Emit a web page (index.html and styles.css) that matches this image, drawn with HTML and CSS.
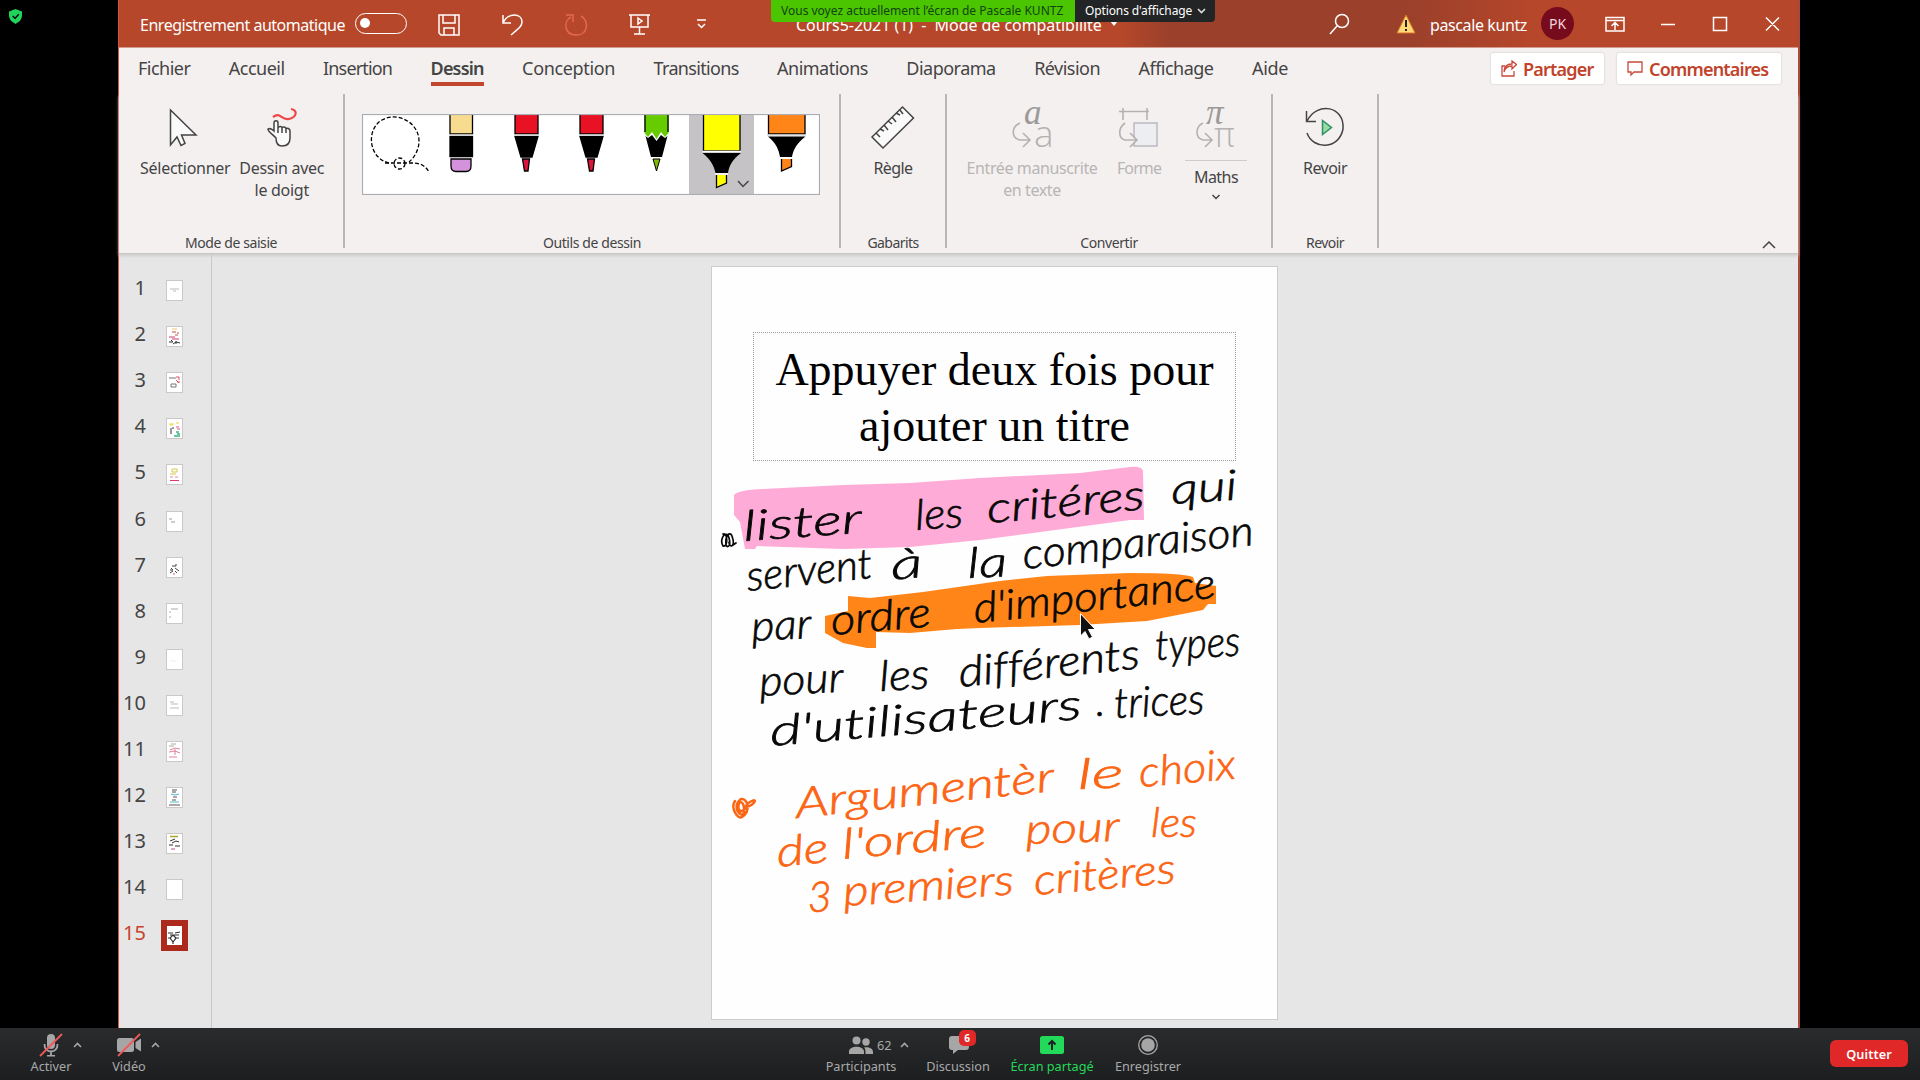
FILE: index.html
```html
<!DOCTYPE html>
<html lang="fr">
<head>
<meta charset="utf-8">
<title>Cours5-2021</title>
<link rel="stylesheet" href="styles.css">
</head>
<body>
<main class="stage">
<section class="window">
  <header class="titlebar">
    <span class="autosave">Enregistrement automatique</span>
    <span class="toggle"><i></i></span>
    <svg class="quick" viewBox="428 0 300 47">
      <g class="line-white">
        <path d="M440 15H460V35H442L440 33ZM444 15V23H456V15M445 35V28H455V35"/>
        <path d="M504 15V23H512M504 23C509 12 523 13 523 22C523 26 520 28 512 35"/>
        <path class="faded" d="M567 15H574V22M582 16C590 20 590 35 577 35C565 35 564 21 572 17"/>
        <path d="M630 15H651M632 15V27H649V15M640.5 27V34M635 34H646"/>
        <path d="M639 18L643 21L639 24Z"/>
        <path d="M698 20H707M699 24L702.5 27.5L706 24"/>
      </g>
    </svg>
    <span class="doc-title">Cours5-2021 (1)&nbsp; -&nbsp; Mode de compatibilité</span>
    <svg class="caret" viewBox="0 0 8 5"><path d="M0 0H8L4 5Z"/></svg>
    <svg class="search" viewBox="1330 12 22 24"><g class="line-white"><circle cx="1343" cy="21" r="6.5"/><path d="M1338 26L1331 34"/></g></svg>
    <svg class="warning" viewBox="0 0 20 20"><path class="tri" d="M10 1L19 19H1Z"/><path d="M9 6H11V13H9ZM9 15H11V17H9Z"/></svg>
    <span class="user">pascale kuntz</span>
    <span class="avatar">PK</span>
    <svg class="controls" viewBox="1600 8 190 32"><g class="line-white">
      <path d="M1606 17.5H1624V31H1606ZM1606 20.5H1624M1615 30V23M1611.5 26L1615 22.500L1618.500 26"/>
      <path d="M1661 24.500H1675M1713.500 17.500H1726.500V30.500H1713.500ZM1766 17.500L1779 30.500M1779 17.500L1766 30.500"/>
    </g></svg>
  </header>

  <nav class="tabs">
    <span class="t1">Fichier</span><span class="t2">Accueil</span><span class="t3">Insertion</span><span class="t4 active">Dessin</span><span class="t5">Conception</span><span class="t6">Transitions</span><span class="t7">Animations</span><span class="t8">Diaporama</span><span class="t9">Révision</span><span class="t10">Affichage</span><span class="t11">Aide</span>
    <div class="actions">
      <button class="share"><svg viewBox="0 0 16 17"><path d="M4 6H1V16H13V11M3 12C4 8 7 6 11 6V9L15.500 4.500L11 1V4C6 4 3 7 3 12Z"/></svg><span>Partager</span></button>
      <button class="comments"><svg viewBox="0 0 16 17"><path d="M1 2H15V12H7L4 15V12H1Z"/></svg><span>Commentaires</span></button>
    </div>
  </nav>

  <section class="ribbon">
    <div class="group g-input">
      <div class="tools">
        <div class="tool select"><svg viewBox="168 106 34 42"><path class="dark fillw" d="M170.500 110V145L177 137L181 145.500L185 143.500L181.500 135H196Z"/></svg><span>Sélectionner</span></div>
        <div class="tool touch"><svg viewBox="264 106 34 42"><path class="red" d="M272 117C280 111 280 121 288 119C296 117 297 110 290 109"/><path class="dark fillw" d="M275 138C271 134 266 130 267 129C269 128 271 129 273 131V123C273 120 277 120 277 123V128C278 126 281 126 281 128C282 126 285 127 285 129C286 127 289 129 289 131V138C289 143 286 146 281 146C277 146 275 143 275 138ZM277 128V133M281 128V133M285 129V133"/></svg><span>Dessin avec</span><span>le doigt</span></div>
      </div>
      <span class="caption">Mode de saisie</span>
    </div>
    <div class="group g-pens">
      <svg class="pens" viewBox="362 114 458 81">
        <rect x="362" y="114" width="458" height="81" fill="#fff"/>
        <rect x="689" y="114" width="65" height="81" fill="#c6c3c6"/>
        <g fill="none" stroke="#000" stroke-width="1.300" stroke-dasharray="4 2"><path d="M389 163C368 158 366 129 382 120C398 111 419 123 419 141C419 150 414 158 409 162"/><path d="M385 163H413C420 163 426 166 429 172"/><circle cx="399.500" cy="163.500" r="5.500"/></g>
        <g stroke="#000" stroke-width="1.300">
          <path fill="#f7dc90" d="M450 114V134H472.500V114"/><path d="M450 136.500H472.500V156.500H450Z"/><path fill="#d592dc" d="M451 159H471V166Q471 171.500 466 171.500H456Q451 171.500 451 166Z"/>
          <path fill="#e81224" d="M515 114V134H538V114M580 114V134H603V114"/>
          <path d="M515 136.500H538L532 157H521ZM580 136.500H603L597 157H586Z"/>
          <path fill="#dc143c" d="M522.500 159H529.500L528 171H524.500ZM587.500 159H594.500L593 171H589.500Z"/>
          <path fill="#66cc00" stroke="none" d="M644.500 114V133L648 137L652 132L656.500 139L661 132L665 137L668.500 133V114Z"/>
          <path d="M645 114V132M668 114V132"/><path stroke="none" d="M645.500 136L648 138L652 135L656.500 141L661 135L665 138L667.500 136L662 157H651Z"/>
          <path fill="#7fba00" d="M653 159H660L656.500 171Z" stroke-width="1"/>
          <path fill="#ff0" d="M703.500 114V151H740V114"/><path stroke="none" d="M702.500 153H741C732 160 729 166 728 173H715.500C714 166 711 160 702.500 153Z"/><path fill="#ff0" d="M716.500 175V187.500L726.500 183V175"/>
          <path stroke="#fff" stroke-width="1.500" d="M702.500 151.600H741M715 174H728"/>
          <path fill="#ff8518" d="M768.500 114V134H805V114"/><path stroke="none" d="M768 136.500H805.500C797 143 793 150 792 157H780C779 150 776 143 768 136.500Z"/><path fill="#ff8518" d="M781.500 159V171L791.500 166.500V159"/>
        </g>
        <path stroke="#ddd" stroke-width="1.500" d="M449 135H473M514 135H539M579 135H604M767 135H806"/>
        <path class="dark" d="M738 181L743 186.500L748.500 181"/>
        <rect x="362.500" y="114.500" width="457" height="80" fill="none" stroke="#aaacb3" stroke-width="1.200"/>
      </svg>
      <span class="caption">Outils de dessin</span>
    </div>
    <div class="group g-ruler">
      <div class="tools"><div class="tool"><svg viewBox="872 105 44 44"><path class="dark fillw" d="M873 137L903.500 107L914.500 118L884 148Z"/><path class="dark" d="M877 133L881 137M881 129L885 131M885 125L889 130M889 121L893 124M893 117L897 122M897 113L901 115M901 110L904 114"/></svg><span>Règle</span></div></div>
      <span class="caption">Gabarits</span>
    </div>
    <div class="group g-convert">
      <div class="tools">
        <div class="tool dim to-text"><svg viewBox="1010 105 44 44"><path class="grey" d="M1020 123C1011 127 1011 138 1020 140H1030M1023 133L1030 140L1023 147"/><text class="script" x="1024" y="124">a</text><text x="1034" y="147" class="plain">a</text></svg><span>Entrée manuscrite</span><span>en texte</span></div>
        <div class="tool dim shape"><svg viewBox="1117 105 44 44"><path fill="#edeef1" stroke="#b9b9c0" stroke-width="1.500" d="M1134 123H1157V146H1134Z"/><path stroke="#f4f0f0" stroke-width="5" d="M1121 140H1137"/><path class="grey" d="M1125 123C1118 128 1118 138 1125 140H1137M1130 133L1137 140L1130 147M1119 111.500H1149M1123 108V120M1147 108V120"/></svg><span>Forme</span></div>
        <div class="tool maths"><svg viewBox="1194 105 44 44"><path class="grey" d="M1203 123C1195 127 1195 138 1203 140H1212M1205 133L1212 140L1205 147"/><text class="script" x="1206" y="124">π</text><text class="plain pi" x="1214" y="147">π</text></svg><span>Maths</span><svg class="chev" viewBox="0 0 10 6"><path class="dark" d="M1.500 1L5 4.500L8.500 1"/></svg></div>
      </div>
      <span class="caption">Convertir</span>
    </div>
    <div class="group g-replay">
      <div class="tools"><div class="tool"><svg viewBox="1304 105 44 44"><path class="dark" d="M1308 133C1314 150 1340 150 1344 129C1346 106 1318 101 1308 121M1307.500 111V121.500H1317"/><path d="M1323.500 120.500V134.500L1332.500 127.500Z" fill="#98dba5" stroke="#2f8f62" stroke-width="1.500"/></svg><span>Revoir</span></div></div>
      <span class="caption">Revoir</span>
    </div>
    <svg class="collapse" viewBox="0 0 14 8"><path class="dark" d="M1 7L7 1L13 7"/></svg>
  </section>

  <section class="workspace">
    <ol class="slides">
      <li><b>1</b><svg viewBox="0 0 15 19"><path stroke="#bbb" d="M3 8H12M6 10H9"/></svg></li>
      <li><b>2</b><svg viewBox="0 0 15 19"><path stroke="#eec85c" d="M5 2H10"/><path stroke="#b54" d="M5 5H9M10 6H12M8 8H11"/><path stroke="#d3366a" d="M2 10H8M5 12H12"/><path stroke="#333" d="M2 15H6L4 13M6 17L9 15L13 16M9 14V17"/></svg></li>
      <li><b>3</b><svg viewBox="0 0 15 19"><path stroke="#777" d="M2 5H9M4 11H9V14H4Z"/><path stroke="#df5264" d="M9 4H12V7M10 9H13M9 7L12 10"/></svg></li>
      <li><b>4</b><svg viewBox="0 0 15 19"><path stroke="#ecd338" d="M2 5H7M9 4H12M3 6H6"/><path stroke="#333" d="M4 9V15M5 9H7"/><path stroke="#e4577a" d="M9 8H12M10 10H13"/><path stroke="#39b681" stroke-width="1.5" d="M9 13H12M7 17H13M10 15H13"/></svg></li>
      <li><b>5</b><svg viewBox="0 0 15 19"><path stroke="#d5c84a" d="M5 4H10V7H5ZM3 9H9"/><path stroke="#e3859e" d="M3 12H6M8 12H11"/><path stroke="#df3a69" d="M3 15.500H12"/></svg></li>
      <li><b>6</b><svg viewBox="0 0 15 19"><path stroke="#999" d="M2 7H5M4 10H8"/></svg></li>
      <li><b>7</b><svg viewBox="0 0 15 19"><path stroke="#444" d="M5 8H9V6M3 12H6L4 10M8 10L12 13M3 15L6 13M8 13L10 15"/><path stroke="#d57" d="M6 16H8"/></svg></li>
      <li><b>8</b><svg viewBox="0 0 15 19"><path stroke="#aaa" d="M4 5H11M2 8H4M2 13H4"/></svg></li>
      <li><b>9</b><svg viewBox="0 0 15 19"><path stroke="#eee" d="M3 11H10"/></svg></li>
      <li><b>10</b><svg viewBox="0 0 15 19"><path stroke="#bbb" d="M3 6H7M4 8H11M3 12H12"/></svg></li>
      <li><b>11</b><svg viewBox="0 0 15 19"><path stroke="#aaa" d="M4 2H9M2 4H7"/><path stroke="#d86581" stroke-width=".8" d="M3 8L8 6L13 7M2 10L8 9L13 11M2 15H10M8 7V13"/></svg></li>
      <li><b>12</b><svg viewBox="0 0 15 19"><path stroke="#555" d="M5 2H10M5 4H9M6 9H10M5 12H9M2 17H13"/><path stroke="#54b9d0" d="M4 6L8 7L12 6M3 14H12"/></svg></li>
      <li><b>13</b><svg viewBox="0 0 15 19"><path stroke="#a7a42f" stroke-width="1.5" d="M3 2.500H11"/><path stroke="#333" d="M3 7L8 5M5 9L9 7L12 8M2 11H6M8 12H13"/><path stroke="#d885b0" stroke-width="1.500" d="M4 15H8"/></svg></li>
      <li><b>14</b><svg viewBox="0 0 15 19"></svg></li>
      <li class="current"><b>15</b><svg viewBox="0 0 15 19"><path stroke="#333" stroke-width="1.200" d="M1 7H6M8 7L13 6M3 9H12M1 12H4M8 12H12M6 9L9 12L6 16L3 12ZM6 16V18"/></svg></li>
    </ol>
    <div class="canvas">
      <article class="slide">
        <h1>Appuyer deux fois pour<br>ajouter un titre</h1>
        <svg class="ink" viewBox="712 267 565 752">
          <path fill="#ffabd7" d="M734 495Q738 490 763 489L843 485L910 483L980 478L1080 473L1130 467Q1142 466 1143 471L1144 520H1130L980 540L910 547L843 549L757 546L755 549H745L740 522L734 515Z"/>
          <path fill="#ff8518" d="M825 616L848 611V596L870 598L923 592L1000 581L1047 576L1130 573Q1182 573 1193 577L1195 583L1216 586V604H1208L1203 610L1147 621L1080 625L980 628L957 629L910 633L876 632V648H867L843 643L825 633Z"/>
          <g class="black">
            <text transform="translate(744 541) rotate(-4)" textLength="119" lengthAdjust="spacingAndGlyphs">lister</text>
            <text transform="translate(916 530) rotate(-4)" textLength="48" lengthAdjust="spacingAndGlyphs">les</text>
            <text transform="translate(988 523) rotate(-5)" textLength="158" lengthAdjust="spacingAndGlyphs">critéres</text>
            <text transform="translate(1172 504) rotate(-4)" textLength="66" lengthAdjust="spacingAndGlyphs">qui</text>
            <text transform="translate(748 591) rotate(-6)" textLength="126" lengthAdjust="spacingAndGlyphs">servent</text>
            <text transform="translate(892 580) rotate(-6)" textLength="32" lengthAdjust="spacingAndGlyphs">à</text>
            <text transform="translate(968 578) rotate(-3)" textLength="40" lengthAdjust="spacingAndGlyphs">la</text>
            <text transform="translate(1024 569) rotate(-6)" textLength="232" lengthAdjust="spacingAndGlyphs">comparaison</text>
            <text transform="translate(752 641) rotate(-3)" textLength="60" lengthAdjust="spacingAndGlyphs">par</text>
            <text transform="translate(832 635) rotate(-5)" textLength="100" lengthAdjust="spacingAndGlyphs">ordre</text>
            <text transform="translate(975 623) rotate(-6)" textLength="243" lengthAdjust="spacingAndGlyphs">d'importance</text>
            <text transform="translate(760 696) rotate(-3)" textLength="84" lengthAdjust="spacingAndGlyphs">pour</text>
            <text transform="translate(880 691) rotate(-3)" textLength="50" lengthAdjust="spacingAndGlyphs">les</text>
            <text transform="translate(960 687) rotate(-6)" textLength="182" lengthAdjust="spacingAndGlyphs">différents</text>
            <text transform="translate(1156 660) rotate(-3)" textLength="85" lengthAdjust="spacingAndGlyphs">types</text>
            <text transform="translate(771 746) rotate(-5)" textLength="313" lengthAdjust="spacingAndGlyphs">d'utilisateurs</text>
            <text transform="translate(1096 716)">.</text>
            <text transform="translate(1115 718) rotate(-3)" textLength="90" lengthAdjust="spacingAndGlyphs">trices</text>
            <path d="M723 534C728 532 728 548 723 546C720 541 723 532 728 535C732 545 728 549 726 545C725 535 730 531 732 536C736 548 729 548 729 542M733 545L736 543"/>
          </g>
          <g class="orange">
            <text transform="translate(797 818) rotate(-6)" textLength="260" lengthAdjust="spacingAndGlyphs">Argumentèr</text>
            <text transform="translate(1078 789) rotate(-2)" textLength="46" lengthAdjust="spacingAndGlyphs">le</text>
            <text transform="translate(1140 787) rotate(-5)" textLength="97" lengthAdjust="spacingAndGlyphs">choix</text>
            <text transform="translate(778 867) rotate(-6)" textLength="52" lengthAdjust="spacingAndGlyphs">de</text>
            <text transform="translate(843 859) rotate(-5)" textLength="145" lengthAdjust="spacingAndGlyphs">l'ordre</text>
            <text transform="translate(1026 844) rotate(-2)" textLength="94" lengthAdjust="spacingAndGlyphs">pour</text>
            <text transform="translate(1151 837)" textLength="46" lengthAdjust="spacingAndGlyphs">les</text>
            <text transform="translate(808 912) rotate(-2)">3</text>
            <text transform="translate(844 906) rotate(-4)" textLength="171" lengthAdjust="spacingAndGlyphs">premiers</text>
            <text transform="translate(1035 895) rotate(-5)" textLength="142" lengthAdjust="spacingAndGlyphs">critères</text>
            <path d="M735 801C730 808 738 820 742 817C751 811 748 798 741 799C734 804 736 812 742 815C746 813 744 799 739 803C736 812 744 815 747 804C759 795 756 805 746 807"/>
          </g>
          <path d="M1080.500 614V636L1085 631.500L1089 639L1092.500 637L1088.500 629.500H1095Z" fill="#111" stroke="#fff" stroke-width="1"/>
        </svg>
      </article>
    </div>
  </section>
</section>
</main>

<div class="share-banner"><span class="viewing">Vous voyez actuellement l’écran de Pascale KUNTZ</span><span class="options"><span>Options d'affichage</span><svg viewBox="0 0 9 6"><path d="M1 1L4.500 4.500L8 1"/></svg></span></div>
<svg class="shield" viewBox="0 0 14 16"><path fill="#1fd35c" d="M7 0L14 2.500V7C14 11 11 14 7 16C3 14 0 11 0 7V2.500Z"/><path d="M4 7.500L6.500 10L10.500 5.500" fill="none" stroke="#000" stroke-width="1.500"/></svg>

<footer class="meeting">
  <div class="item mic"><div class="pic"><svg width="24" height="24" viewBox="39 1033 24 24"><g fill="#a6a6a6"><rect x="47" y="1034" width="8" height="15" rx="4"/><path d="M47 1055H55V1056.500H47Z"/></g><path d="M44.500 1044C44 1054 58 1054 57.500 1044M51 1051V1056" fill="none" stroke="#a6a6a6" stroke-width="1.800"/><path class="slash" d="M40 1056L62 1034"/></svg><svg class="up" viewBox="0 0 9 6"><path d="M1 5L4.500 1.500L8 5"/></svg></div><span>Activer</span></div>
  <div class="item cam"><div class="pic"><svg width="25" height="24" viewBox="117 1033 25 24"><g fill="#a6a6a6"><rect x="117" y="1038" width="17" height="14" rx="2.500"/><path d="M135.500 1042L141 1038.500V1051.500L135.500 1048Z"/></g><path class="slash" d="M118 1056L140 1034"/></svg><svg class="up" viewBox="0 0 9 6"><path d="M1 5L4.500 1.500L8 5"/></svg></div><span>Vidéo</span></div>
  <div class="item people"><div class="pic"><svg width="26" height="24" viewBox="848 1033 26 24"><g fill="#a6a6a6"><circle cx="856.500" cy="1040.500" r="4"/><circle cx="866" cy="1042" r="3.700"/><path d="M849 1054V1051.500C849 1045 864 1045 864 1051.500V1054ZM865.500 1054C865.500 1050 865.500 1049 864 1047.500C868 1046.500 873 1048 873 1052V1054Z"/></g></svg><em>62</em><svg class="up" viewBox="0 0 9 6"><path d="M1 5L4.500 1.500L8 5"/></svg></div><span>Participants</span></div>
  <div class="item chat"><div class="pic"><svg width="21" height="24" viewBox="947 1033 21 24"><path fill="#a6a6a6" d="M951 1036H965Q968 1036 968 1039V1047Q968 1050 965 1050H957L952 1054V1050H951Q948 1050 948 1047V1039Q948 1036 951 1036Z"/></svg><strong class="badge">6</strong></div><span>Discussion</span></div>
  <div class="item screen"><div class="pic"><svg width="24" height="24" viewBox="1041 1033 24 24"><rect x="1041" y="1036" width="24" height="18" rx="2.500" fill="#23d959"/><path d="M1053 1050V1041M1049.500 1044.500L1053 1041L1056.500 1044.500" fill="none" stroke="#1d1f21" stroke-width="2"/></svg></div><span>Écran partagé</span></div>
  <div class="item rec"><div class="pic"><svg width="22" height="24" viewBox="1138 1033 22 24"><circle cx="1149" cy="1045" r="9.300" fill="none" stroke="#a6a6a6" stroke-width="1.300"/><circle cx="1149" cy="1045" r="6.800" fill="#a6a6a6"/></svg></div><span>Enregistrer</span></div>
  <button class="quit">Quitter</button>
</footer>
</body>
</html>
```
FILE: styles.css
```css
* { box-sizing: border-box; }
body { margin: 0; width: 1920px; height: 1080px; overflow: hidden; position: relative; background: #000; font-family: "Noto Sans", "Open Sans", sans-serif; color: #444; display: flex; flex-direction: column; }
svg { display: block; flex: none; }
button { font: inherit; border: 0; padding: 0; margin: 0; }
span { white-space: nowrap; }
.stage { height: 1028px; padding: 0 120px 0 118px; }
.window { height: 1028px; display: flex; flex-direction: column; background: #e6e6e6; border-left: 1px solid #d0563c; border-right: 2px solid #a9493c; }

.titlebar { height: 47px; display: flex; align-items: center; color: #fff; font-size: 16px; background: linear-gradient(90deg, #b7472a 0 1000px, #9b402b 1050px 1290px, #b7472a 1420px); padding-left: 21px; flex: none; }
.autosave { width: 215px; letter-spacing: -.48px; padding-top: 2px; }
.toggle { width: 52px; height: 21px; border: 1.5px solid #fff; border-radius: 11px; padding: 4px; margin-right: 20px; }
.toggle i { display: block; width: 10px; height: 10px; border-radius: 50%; background: #fff; }
.quick { width: 300px; height: 47px; }
.line-white { fill: none; stroke: #fff; stroke-width: 1.5; }
.faded { stroke: #e5694e; }
.doc-title { width: 314px; margin-left: 69px; letter-spacing: -.05px; padding-top: 2px; }
.caret { width: 8px; height: 5px; fill: #fff; }
.search { width: 22px; height: 24px; margin-left: 211px; }
.warning { width: 20px; height: 20px; margin: 0 14px 0 45px; fill: #222; }
.warning .tri { fill: #ffd976; stroke: #d87824; }
.user { width: 111px; letter-spacing: -.39px; padding-top: 2px; }
.avatar { width: 33px; height: 33px; border-radius: 50%; background: #750b1c; font-size: 14px; display: grid; place-items: center; color: #f5d5dc; }
.controls { width: 190px; height: 32px; margin-left: 26px; }

.tabs { height: 47px; flex: none; border-top: 1px solid #d59a8b; background: #f4f0f0; display: flex; gap: 38.500px; padding: 4px 17px 0 19px; font-size: 18px; line-height: 32px; letter-spacing: -.52px; align-items: flex-start; }
.t3 { letter-spacing: -.84px; }
.t5, .t11 { letter-spacing: -.34px; }
.t6 { letter-spacing: -.68px; }
.tabs .active { font-weight: 600; letter-spacing: -.84px; height: 34px; border-bottom: 4px solid #c1472c; }
.actions { margin-left: auto; display: flex; gap: 13px; color: #c1432b; font-weight: 600; letter-spacing: -.8px; }
.actions button { height: 31px; margin-top: 1px; letter-spacing: inherit; display: flex; align-items: center; gap: 6px; padding: 0 10px; border-radius: 2px; background: #fff; box-shadow: 0 0 2px #bbb; color: inherit; }
.actions svg { width: 16px; height: 17px; fill: none; stroke: #c9483a; stroke-width: 1.3; }
.share { width: 113px; }
.comments { width: 164px; }

.ribbon { height: 160px; flex: none; display: flex; background: #f4f0f0; border-bottom: 1px solid #c8c6c6; box-shadow: 0 2px 3px #ccc; position: relative; font-size: 16px; line-height: 22px; letter-spacing: -.4px; }
.group { height: 154px; border-right: 2px solid #b9b6b6; display: flex; flex-direction: column; align-items: center; justify-content: space-between; }
.g-input { width: 226px; } .g-pens { width: 496px; } .g-ruler { width: 106px; letter-spacing: -.58px; } .g-convert { width: 326px; } .g-replay { width: 106px; letter-spacing: -.54px; }
.tools { display: flex; padding-top: 11px; }
.tool { display: flex; flex-direction: column; align-items: center; }
.tool > svg { width: 44px; height: 44px; margin-bottom: 8px; overflow: visible; }
.g-input .tools { padding-left: 5px; letter-spacing: -.28px; }
.select, .touch { width: 96.5px; }
.select > svg, .touch > svg { width: 34px; height: 42px; margin: 1px 0 9px; }
.caption { font-size: 14px; line-height: 20px; margin-bottom: -5px; }
.pens { width: 458px; height: 81px; margin: 20px 2px 0 0; }
.dark { fill: none; stroke: #444; stroke-width: 1.5; }
.fillw { fill: #fafafa; }
.red { fill: none; stroke: #f04646; stroke-width: 2.2; }
.grey { fill: none; stroke: #b4b1b1; stroke-width: 1.6; }
.dim { color: #b8b5b5; }
.to-text { width: 130px; } .shape { width: 84px; letter-spacing: -.9px; } .maths { width: 70px; letter-spacing: -.57px; }
.maths > span { border-top: 1.5px solid #ccc; padding: 4px 9px 0; margin-top: 3px; line-height: 24px; }
.maths > .chev { width: 10px; height: 6px; margin-top: 5px; }
.script { font: italic 35px "Liberation Serif", serif; fill: #9c9999; }
.plain { font: 300 37px "Open Sans", sans-serif; fill: #b4b1b1; }
.pi { font-size: 34px; }
.collapse { width: 14px; height: 8px; margin: 147px 22px 0 auto; }

.workspace { flex: 1; display: flex; }
.slides { width: 93px; margin: 0; padding: 12px 0 0; list-style: none; border-right: 1px solid #c9c9c9; font-size: 20px; }
.slides li { height: 46.100px; display: grid; grid-template-columns: 27px 27px; column-gap: 15px; align-items: center; }
.slides b { font-weight: 400; text-align: right; line-height: 44px; padding-bottom: 2px; }
.slides svg { width: 15px; height: 19px; background: #fff; outline: 1px solid #ccc8c8; margin: 3px 6px 0; fill: none; }
.current { color: #c9432d; }
.current svg { outline: 6px solid #ac2a1c; }
.canvas { flex: 1; padding: 13px 0 0 500px; }
.slide { width: 565px; height: 752px; background: #fefefe; box-shadow: 0 0 0 1px #ccc; display: grid; grid-template: 65px 129px 1fr / 41px 483px 1fr; }
.slide h1 { grid-area: 2 / 2; margin: 0; border: 1px dotted #999; text-align: center; padding-top: 9px; font: 46px/56px "Liberation Serif", serif; color: #000; }
.ink { grid-area: 1 / 1 / 4 / 4; width: 565px; height: 752px; font: italic 300 42px Lato, sans-serif; font-variant-ligatures: none; }
.ink path { stroke-linecap: round; stroke-linejoin: round; }
.ink text { stroke-width: .7; stroke-linejoin: round; }
.black { fill: #080808; } .orange { fill: #fb6514; }
.black text { stroke: #080808; } .orange text { stroke: #fb6514; }
.black path { fill: none; stroke: #080808; stroke-width: 1.7; }
.orange path { fill: none; stroke: #fb6514; stroke-width: 2.5; }

.share-banner { position: absolute; top: 0; left: 771px; height: 22px; display: flex; font-size: 12px; line-height: 22px; }
.viewing { width: 304px; background: #4bc500; color: #141; padding-left: 10px; border-radius: 0 0 0 4px; }
.options { width: 140px; background: #222426; color: #fff; padding-left: 10px; letter-spacing: -.12px; display: flex; align-items: center; gap: 5px; border-radius: 0 0 4px 0; }
.options svg, .up { width: 9px; height: 6px; fill: none; stroke: #ddd; stroke-width: 1.6; }
.shield { position: absolute; left: 9px; top: 9px; width: 13px; height: 15px; }

.meeting { height: 52px; display: flex; background: linear-gradient(#292b2d, #1c1e20); color: #a9a9a9; font-size: 12.7px; padding-left: 20px; }
.item { width: 62px; display: flex; flex-direction: column; align-items: center; padding-top: 5px; line-height: 17px; }
.pic { height: 24px; margin-bottom: 1px; display: flex; align-items: center; position: relative; }
.up { stroke: #a6a6a6; }
.mic .up, .cam .up { position: absolute; left: 34px; top: 9px; }
.slash { stroke: #f0575a; stroke-width: 1.8; }
.cam { margin-left: 16px; }
.people { width: 90px; margin-left: 656px; }
.people .pic { gap: 3px; width: 60px; margin-left: 34px; }
.people em { font-style: normal; }
.people .up { margin-left: 5px; }
.chat { width: 80px; margin-left: 12px; }
.badge { position: absolute; left: 11px; top: -3px; width: 17px; height: 16px; border-radius: 5px; background: #e02828; color: #fff; font-size: 10px; line-height: 16px; text-align: center; }
.screen { width: 90px; margin-left: 9px; color: #23d959; }
.rec { width: 80px; margin-left: 11px; }
.quit { margin: 12px 12px 0 auto; width: 78px; height: 27px; border-radius: 6px; background: #e02828; color: #fff; font-weight: 600; letter-spacing: .1px; }
```
